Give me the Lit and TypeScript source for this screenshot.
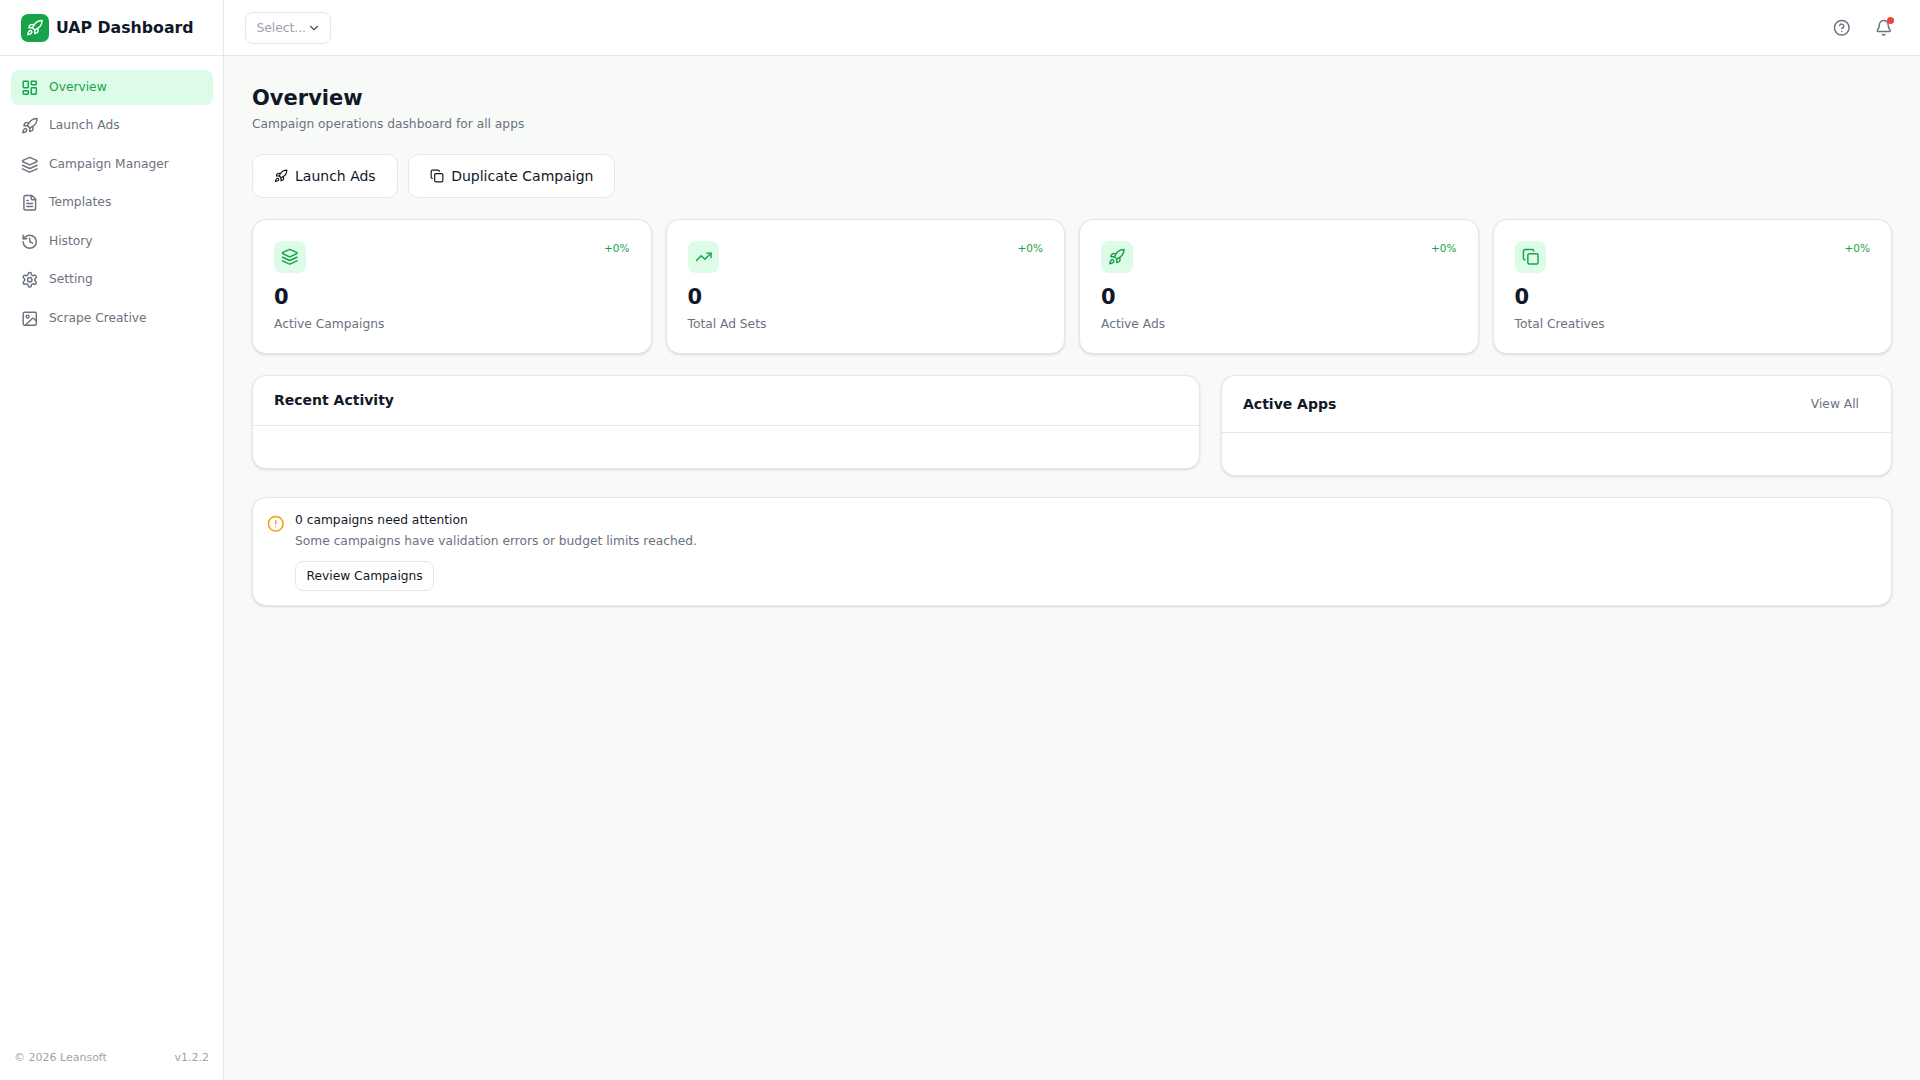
import { LitElement, html, css, svg } from 'lit';
import { customElement } from 'lit/decorators.js';

// icon bodies, 24x24 stroke icons
const icons: Record<string, unknown> = {
  dashboard: svg`<rect width="7" height="9" x="3" y="3" rx="1"/><rect width="7" height="5" x="14" y="3" rx="1"/><rect width="7" height="9" x="14" y="12" rx="1"/><rect width="7" height="5" x="3" y="16" rx="1"/>`,
  rocket: svg`<path d="M4.5 16.5c-1.5 1.26-2 5-2 5s3.74-.5 5-2c.71-.84.7-2.13-.09-2.91a2.18 2.18 0 0 0-2.91-.09z"/><path d="m12 15-3-3a22 22 0 0 1 2-3.95A12.88 12.88 0 0 1 22 2c0 2.72-.78 7.5-6 11a22.35 22.35 0 0 1-4 2z"/><path d="M9 12H4s.55-3.03 2-4c1.62-1.08 5 0 5 0"/><path d="M12 15v5s3.03-.55 4-2c1.08-1.62 0-5 0-5"/>`,
  layers: svg`<path d="m12.83 2.18a2 2 0 0 0-1.66 0L2.6 6.08a1 1 0 0 0 0 1.83l8.58 3.91a2 2 0 0 0 1.66 0l8.58-3.9a1 1 0 0 0 0-1.83Z"/><path d="m22 17.65-9.17 4.16a2 2 0 0 1-1.66 0L2 17.65"/><path d="m22 12.65-9.17 4.16a2 2 0 0 1-1.66 0L2 12.65"/>`,
  file: svg`<path d="M15 2H6a2 2 0 0 0-2 2v16a2 2 0 0 0 2 2h12a2 2 0 0 0 2-2V7Z"/><path d="M14 2v4a2 2 0 0 0 2 2h4"/><path d="M16 13H8"/><path d="M16 17H8"/><path d="M10 9H8"/>`,
  history: svg`<path d="M3 12a9 9 0 1 0 9-9 9.75 9.75 0 0 0-6.74 2.74L3 8"/><path d="M3 3v5h5"/><path d="M12 7v5l4 2"/>`,
  settings: svg`<path d="M12.22 2h-.44a2 2 0 0 0-2 2v.18a2 2 0 0 1-1 1.73l-.43.25a2 2 0 0 1-2 0l-.15-.08a2 2 0 0 0-2.73.73l-.22.38a2 2 0 0 0 .73 2.73l.15.1a2 2 0 0 1 1 1.72v.51a2 2 0 0 1-1 1.74l-.15.09a2 2 0 0 0-.73 2.73l.22.38a2 2 0 0 0 2.73.73l.15-.08a2 2 0 0 1 2 0l.43.25a2 2 0 0 1 1 1.73V20a2 2 0 0 0 2 2h.44a2 2 0 0 0 2-2v-.18a2 2 0 0 1 1-1.73l.43-.25a2 2 0 0 1 2 0l.15.08a2 2 0 0 0 2.73-.73l.22-.39a2 2 0 0 0-.73-2.73l-.15-.08a2 2 0 0 1-1-1.74v-.5a2 2 0 0 1 1-1.74l.15-.09a2 2 0 0 0 .73-2.73l-.22-.38a2 2 0 0 0-2.73-.73l-.15.08a2 2 0 0 1-2 0l-.43-.25a2 2 0 0 1-1-1.73V4a2 2 0 0 0-2-2z"/><circle cx="12" cy="12" r="3"/>`,
  image: svg`<rect width="18" height="18" x="3" y="3" rx="2"/><circle cx="9" cy="9" r="2"/><path d="m21 15-3.09-3.09a2 2 0 0 0-2.82 0L6 21"/>`,
  trending: svg`<path d="M22 7 13.5 15.5l-5-5L2 17"/><path d="M16 7h6v6"/>`,
  copy: svg`<rect width="14" height="14" x="8" y="8" rx="2"/><path d="M4 16c-1.1 0-2-.9-2-2V4c0-1.1.9-2 2-2h10c1.1 0 2 .9 2 2"/>`,
  alert: svg`<circle cx="12" cy="12" r="10"/><path d="M12 8v4"/><path d="M12 16h.01"/>`,
  help: svg`<circle cx="12" cy="12" r="10"/><path d="M9.09 9a3 3 0 0 1 5.83 1c0 2-3 3-3 3"/><path d="M12 17h.01"/>`,
  bell: svg`<path d="M10.27 21a2 2 0 0 0 3.46 0"/><path d="M3.26 15.33A1 1 0 0 0 4 17h16a1 1 0 0 0 .74-1.67C19.41 13.96 18 12.5 18 8A6 6 0 0 0 6 8c0 4.5-1.41 5.96-2.74 7.33"/>`,
  chevron: svg`<path d="m6 9 6 6 6-6"/>`,
};

const icon = (name: string, cls = '') =>
  html`<svg class="icon ${cls}" viewBox="0 0 24 24" fill="none" stroke="currentColor" stroke-width="2" stroke-linecap="round" stroke-linejoin="round">${icons[name]}</svg>`;

const NAV = [
  { label: 'Overview', icon: 'dashboard', active: true },
  { label: 'Launch Ads', icon: 'rocket' },
  { label: 'Campaign Manager', icon: 'layers' },
  { label: 'Templates', icon: 'file' },
  { label: 'History', icon: 'history' },
  { label: 'Setting', icon: 'settings' },
  { label: 'Scrape Creative', icon: 'image' },
];

const STATS = [
  { label: 'Active Campaigns', icon: 'layers' },
  { label: 'Total Ad Sets', icon: 'trending' },
  { label: 'Active Ads', icon: 'rocket' },
  { label: 'Total Creatives', icon: 'copy' },
];

@customElement('app-root')
export class AppRoot extends LitElement {
  static styles = css`
    :host {
      display: flex;
      width: 100%;
      height: 1080px;
      overflow: hidden;
      background: #f8faf8;
      color: #111827;
      font-family: 'DejaVu Sans', sans-serif;
    }
    .icon { display: block; flex: none; }

    /* sidebar */
    .sidebar {
      width: 224px;
      flex: none;
      box-sizing: border-box;
      background: #fff;
      border-right: 1px solid #e5e7eb;
      display: flex;
      flex-direction: column;
    }
    .brand {
      height: 56px;
      box-sizing: border-box;
      border-bottom: 1px solid #e5e7eb;
      display: flex;
      align-items: center;
      gap: 7px;
      padding: 0 0 0 21px;
      font-size: 15.75px;
      font-weight: 700;
    }
    .logo {
      width: 28px;
      height: 28px;
      border-radius: 7px;
      background: #16a34a;
      color: #fff;
      display: flex;
      align-items: center;
      justify-content: center;
    }
    .logo .icon { width: 17.5px; height: 17.5px; }
    nav {
      flex: 1;
      padding: 14px 10.5px 0;
      display: flex;
      flex-direction: column;
      gap: 3.5px;
    }
    .nav-item {
      height: 35px;
      border-radius: 8px;
      padding: 0 10.5px;
      display: flex;
      align-items: center;
      gap: 10.5px;
      font-size: 12.25px;
      color: #6b7280;
    }
    .nav-item span { padding-bottom: 1.5px; }
    .nav-item .icon { width: 17.5px; height: 17.5px; }
    .nav-item.active { background: #dcfce7; color: #16a34a; }
    .foot {
      display: flex;
      justify-content: space-between;
      padding: 0 14px;
      height: 29px;
      font-size: 11px;
      color: #9ca3af;
    }

    /* topbar */
    .content { flex: 1; min-width: 0; display: flex; flex-direction: column; }
    .topbar {
      height: 56px;
      flex: none;
      box-sizing: border-box;
      background: #fff;
      border-bottom: 1px solid #e5e7eb;
      display: flex;
      align-items: center;
      justify-content: space-between;
      padding: 0 27.5px 0 21px;
    }
    .select {
      height: 32px;
      box-sizing: border-box;
      border: 1px solid #e5e7eb;
      border-radius: 8px;
      padding: 0 9.5px 0 10.5px;
      display: flex;
      align-items: center;
      font-size: 12.25px;
      color: #9ca3af;
    }
    .select .icon { width: 14px; height: 14px; margin-left: 1px; color: #4b5563; }
    .top-actions { display: flex; align-items: center; gap: 24.5px; color: #6b7280; }
    .top-actions .icon { width: 17.5px; height: 17.5px; }
    .bell { position: relative; }
    .dot {
      position: absolute;
      top: -2px;
      right: -1.5px;
      width: 7px;
      height: 7px;
      border-radius: 50%;
      background: #ef4444;
    }

    /* main */
    main { padding: 28px; display: flex; flex-direction: column; }
    h1 { margin: 0; font-size: 21px; line-height: 28px; font-weight: 700; }
    .sub { margin-top: 3.5px; font-size: 12.25px; line-height: 17.5px; color: #6b7280; }
    .actions { display: flex; gap: 10.5px; margin-top: 21px; }
    .btn {
      height: 44px;
      box-sizing: border-box;
      padding: 0 21px;
      background: #fff;
      border: 1px solid #e5e7eb;
      border-radius: 10px;
      display: flex;
      align-items: center;
      gap: 7px;
      font-size: 14px;
      color: #111827;
    }
    .btn .icon { width: 14px; height: 14px; }
    .stats {
      display: grid;
      grid-template-columns: repeat(4, 1fr);
      gap: 14px;
      margin-top: 21px;
    }
    .card {
      background: #fff;
      border: 1px solid #e5e7eb;
      border-radius: 14px;
      box-shadow: 0 1px 3px rgba(0, 0, 0, 0.1), 0 1px 2px -1px rgba(0, 0, 0, 0.1);
    }
    .stat { padding: 21px 21px 19.5px; }
    .stat-top { display: flex; justify-content: space-between; align-items: flex-start; }
    .stat-icon {
      width: 31.5px;
      height: 31.5px;
      border-radius: 8px;
      background: #dcfce7;
      color: #16a34a;
      display: flex;
      align-items: center;
      justify-content: center;
    }
    .stat-icon .icon { width: 17.5px; height: 17.5px; }
    .change { font-size: 10.5px; color: #16a34a; line-height: 14px; }
    .value { margin-top: 10.5px; font-size: 21px; line-height: 28px; font-weight: 700; }
    .label { margin-top: 4.5px; font-size: 12.25px; line-height: 17.5px; color: #6b7280; }
    .panels {
      display: grid;
      grid-template-columns: 948px 671px;
      gap: 21px;
      margin-top: 21px;
      align-items: start;
    }
    .panel-head {
      display: flex;
      align-items: center;
      justify-content: space-between;
      padding: 0 32px 0 21px;
      border-bottom: 1px solid #e5e7eb;
      font-size: 14px;
      font-weight: 700;
    }
    .recent .panel-head { height: 49.5px; }
    .apps .panel-head { height: 56px; }
    .panel-body { height: 42px; }
    .view-all { font-size: 12.25px; font-weight: 400; color: #6b7280; }
    .notice {
      margin-top: 21.5px;
      padding: 14px;
      display: flex;
      gap: 10.5px;
    }
    .notice > .icon { width: 17.5px; height: 17.5px; color: #f59e0b; margin-top: 2.5px; }
    .notice-title { font-size: 12.25px; line-height: 17.5px; }
    .notice-text { font-size: 12.25px; line-height: 17.5px; margin-top: 3.5px; color: #6b7280; }
    .small-btn {
      display: inline-flex;
      align-items: center;
      height: 29.5px;
      box-sizing: border-box;
      margin-top: 10.5px;
      padding: 0 10.5px;
      border: 1px solid #e5e7eb;
      border-radius: 8px;
      font-size: 12.25px;
    }
  `;

  render() {
    return html`
      <aside class="sidebar">
        <div class="brand"><span class="logo">${icon('rocket')}</span>UAP Dashboard</div>
        <nav>
          ${NAV.map(
            (n) => html`<div class="nav-item ${n.active ? 'active' : ''}">${icon(n.icon)}<span>${n.label}</span></div>`
          )}
        </nav>
        <div class="foot"><span>© 2026 Leansoft</span><span>v1.2.2</span></div>
      </aside>
      <div class="content">
        <header class="topbar">
          <div class="select"><span>Select...</span>${icon('chevron')}</div>
          <div class="top-actions">
            ${icon('help')}
            <span class="bell">${icon('bell')}<span class="dot"></span></span>
          </div>
        </header>
        <main>
          <h1>Overview</h1>
          <div class="sub">Campaign operations dashboard for all apps</div>
          <div class="actions">
            <div class="btn">${icon('rocket')}Launch Ads</div>
            <div class="btn">${icon('copy')}Duplicate Campaign</div>
          </div>
          <div class="stats">
            ${STATS.map(
              (s) => html`<div class="card stat">
                <div class="stat-top">
                  <span class="stat-icon">${icon(s.icon)}</span>
                  <span class="change">+0%</span>
                </div>
                <div class="value">0</div>
                <div class="label">${s.label}</div>
              </div>`
            )}
          </div>
          <div class="panels">
            <section class="card recent">
              <div class="panel-head">Recent Activity</div>
              <div class="panel-body"></div>
            </section>
            <section class="card apps">
              <div class="panel-head">Active Apps<span class="view-all">View All</span></div>
              <div class="panel-body"></div>
            </section>
          </div>
          <section class="card notice">
            ${icon('alert')}
            <div>
              <div class="notice-title">0 campaigns need attention</div>
              <div class="notice-text">Some campaigns have validation errors or budget limits reached.</div>
              <div class="small-btn">Review Campaigns</div>
            </div>
          </section>
        </main>
      </div>
    `;
  }
}
